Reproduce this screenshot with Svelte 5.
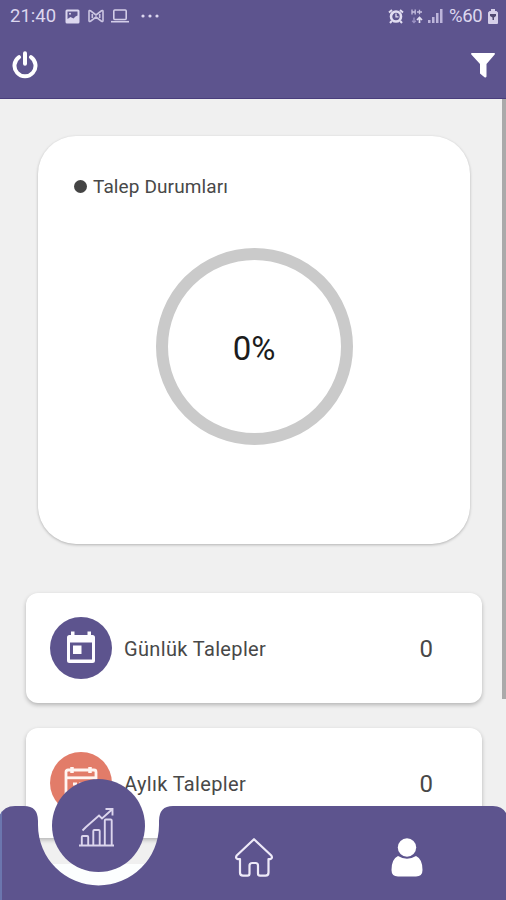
<script>
  const rows = [
    { label: 'Günlük Talepler', value: 0, icon: 'day' },
    { label: 'Aylık Talepler', value: 0, icon: 'month' }
  ];
  const percent = 0;
</script>

<div class="screen">
  <header>
    <div class="status">
      <div class="left">
        <span class="time">21:40</span>
        <svg class="picture" width="15" height="15" viewBox="0 0 15 15">
          <rect x=".5" y=".5" width="14" height="14" rx="1.5" fill="#dcd7ef" />
          <path d="M2.500 2.500h10v4l-2 1-2 2-3-1.500-3 2z" fill="#5d548e" />
          <circle cx="5" cy="4.800" r="1" fill="#dcd7ef" />
        </svg>
        <svg class="link" width="16" height="14" viewBox="0 0 16 14" fill="none" stroke="#cbc5e2" stroke-width="1.600">
          <path d="M1 12V2.500Q1 1 2.500 1.800L8 6l5.500-4.200Q15 1 15 2.500v9q0 1.500-1.500.7L8 8l-5.500 4.200Q1 13 1 11.500M4.300 5v4M11.700 5v4" />
        </svg>
        <svg class="laptop" width="18" height="14" viewBox="0 0 18 14" fill="none" stroke="#d3cde8" stroke-width="1.600">
          <rect x="2.800" y="1" width="12.400" height="9.500" rx="1" />
          <path d="M0 12.700h18" />
        </svg>
        <svg width="18" height="4" viewBox="0 0 18 4" fill="#dcd7ef">
          <circle cx="2" cy="2" r="1.600" /><circle cx="9" cy="2" r="1.600" /><circle cx="16" cy="2" r="1.600" />
        </svg>
      </div>
      <div class="right">
        <svg width="16" height="15" viewBox="0 0 16 15" fill="none" stroke="#e2def1" stroke-width="2.600">
          <circle cx="8" cy="7.500" r="5" />
          <path d="M1 3.500 4 1M15 3.500 12 1M3.800 12 2 14M12.200 12l1.800 2" stroke-width="2" />
          <path d="M8 4.500v3.300h2.500" stroke-width="1.300" />
        </svg>
        <svg class="data" width="12" height="15" viewBox="0 0 12 15" fill="none" stroke="#c6bfdf" stroke-width="1.300">
          <path d="M1 .5v5M4.200.5v5M1 3h3.200M6 3h5M8.500.8v4.400" />
          <path d="M3 8.500v5M1.200 11.700 3 13.600l1.800-1.900" stroke="#9b91c3" />
          <path d="M8.500 14V9M6 11l2.500-2.500L11 11" stroke="#e2def1" stroke-width="1.700" />
        </svg>
        <svg class="signal" width="15" height="14" viewBox="0 0 15 14" fill="#bdb5da">
          <path d="M0 11h2.500v3H0zM4 8h2.500v6H4zM8 4h2.500v10H8zM12 0h2.500v14H12z" />
        </svg>
        <span class="battery-text">%60</span>
        <svg width="10" height="15" viewBox="0 0 10 15">
          <path d="M3 0h4v2h1.500L10 3.500V14q0 1-1 1H1q-1 0-1-1V3.500L1.500 2H3z" fill="#d6d0e9" />
          <path d="M2 5h6v2L6 8.500V11H4.500V8.500L2 7z" fill="#514a72" />
        </svg>
      </div>
    </div>
    <div class="toolbar">
      <svg width="26" height="28" viewBox="0 0 26 28" fill="none" stroke="#fff" stroke-linecap="round">
        <path d="M7 6.200A10.500 10.500 0 1 0 19 6.200" stroke-width="4" />
        <path d="M13 2.200v10.500" stroke-width="4" />
      </svg>
      <svg width="24" height="25" viewBox="0 0 24 25">
        <path d="M.8 0h22.400q1.200.5.500 1.500L15.500 11v12.500q-.5 1.500-2 .7L9 20.500V11L.3 1.500Q-.3.5.8 0z" fill="#fff" />
      </svg>
    </div>
  </header>

  <main>
    <div class="scroll">
      <section class="chart">
        <div class="legend"><i></i><span>Talep Durumları</span></div>
        <div class="ring"><span>{percent}%</span></div>
      </section>
      {#each rows as row}
        <article class="row">
          <div class="badge {row.icon}">
            {#if row.icon === 'day'}
              <svg width="30" height="34" viewBox="0 0 30 34">
                <path fill-rule="evenodd" fill="#fdfcff" d="M5 .5h3.500V4h13V.5H25V4h1.500Q29 4 29 6.500v23q0 2.500-2.500 2.500h-23Q1 32 1 29.500v-23Q1 4 3.500 4H5zM4 11.500v17h22v-17z" />
                <rect x="7" y="14.500" width="8.500" height="8.500" fill="#fdfcff" />
              </svg>
            {:else}
              <svg width="34" height="34" viewBox="0 0 34 34" fill="none" stroke="#fff5f2" stroke-width="2.800">
                <rect x="2" y="4" width="30" height="28" rx="2" />
                <path d="M2 11.800h30" />
                <path d="M8 1v6M26 1v6" stroke-width="3.500" />
                <path d="M9 18h4M15 18h4M21 18h4M9 24h4M15 24h4M21 24h4" />
              </svg>
            {/if}
          </div>
          <span class="label">{row.label}</span>
          <span class="value">{row.value}</span>
        </article>
      {/each}
    </div>
    <div class="track"><div class="thumb"></div></div>
  </main>

  <nav>
    <svg class="shape" width="506" height="94" viewBox="0 0 506 94">
      <path d="M30 58H167V94H30z" fill="#fcfefe" />
      <path d="M0 94V9Q4 0 15 0H24Q38 0 38 15V19A60.500 60.500 0 0 0 159 19V15Q159 0 173 0H493Q502 0 506 7V94z" fill="#5d548e" />
      <path d="M0 94V9L2 5V94z" fill="#6b76ae" />
    </svg>
    <div class="tabs">
      <button class="stats" aria-label="İstatistik">
        <svg width="36" height="40" viewBox="0 0 36 40" fill="none" stroke="#dcd5ed" stroke-width="1.900">
          <path d="M0 38.500h35M2.800 38v-8q0-1 1-1h4.400q1 0 1 1v8M14.300 38V24q0-1 1-1h4.400q1 0 1 1v14M25.800 38V13.500q0-1 1-1h4.900q1 0 1 1V38" />
          <path d="M3.500 23.500 7 20M7 20 20 8.500l3 3L33 2.500M26.500 2H33.500V8.500" />
        </svg>
      </button>
      <button class="home" aria-label="Ana sayfa">
        <svg width="38" height="39" viewBox="0 0 38 39" fill="none" stroke="#eeeaf8" stroke-width="2.200" stroke-linejoin="round">
          <path d="M19 1.200 36.300 17.500Q38 20.500 35 21.200H33.500V34.500Q33.500 37.700 30.500 37.700H25Q23 37.700 23 35.500V27.500Q23 25 20.500 25H17.500Q14.500 25 14.500 27.500V35.500Q14.500 37.700 12.500 37.700H8Q5 37.700 5 34.500V21.200H3Q0 20.500 1.700 17.500z" />
        </svg>
      </button>
      <button class="user" aria-label="Profil">
        <svg width="32" height="39" viewBox="0 0 32 39" fill="#fff">
          <circle cx="16" cy="9.500" r="9.200" />
          <path d="M7 18Q16 23.500 25 18Q31.500 21 31.500 32Q31.500 38.500 25 38.500H7Q.5 38.500.5 32Q.5 21 7 18z" />
        </svg>
      </button>
    </div>
  </nav>
</div>

<style>
  :global(body) { margin: 0; }
  .screen {
    position: relative;
    width: 506px;
    height: 900px;
    overflow: hidden;
    display: flex;
    flex-direction: column;
    background: #f0f0f0;
    font-family: Roboto, "Liberation Sans", sans-serif;
    color: #484848;
  }
  svg { display: block; flex: none; }
  header {
    height: 99px;
    box-sizing: border-box;
    flex: none;
    background: #5d548e;
    border-bottom: 1px solid #493d7c;
  }
  .status {
    height: 32px;
    padding: 0 8px 0 10px;
    display: flex;
    justify-content: space-between;
    color: #dcd7ef;
  }
  .left, .right { display: flex; align-items: center; }
  .time { width: 55px; font-size: 18.5px; }
  .link { margin-left: 8px; }
  .laptop { margin: 0 12px 0 7px; }
  .data { margin-left: 7px; }
  .signal { margin: 0 6px 0 5px; }
  .battery-text { width: 39px; font-size: 18.5px; letter-spacing: -.4px; white-space: nowrap; }
  .toolbar {
    height: 65px;
    padding: 0 11px 0 12px;
    display: flex;
    align-items: center;
    justify-content: space-between;
  }
  .toolbar svg:last-child { margin-top: 2px; }
  main { flex: 1; min-height: 0; display: flex; }
  .scroll { flex: 1; overflow: hidden; padding: 37px 20px 0 26px; }
  .track { width: 4px; }
  .thumb { height: 600px; background: #aaa; }
  .chart {
    height: 408px;
    box-sizing: border-box;
    margin: 0 12px 49px 12px;
    padding: 38px 35px 0;
    border-radius: 38px;
    background: #fff;
    box-shadow: 0 1px 3px rgba(0, 0, 0, .26);
  }
  .legend { display: flex; align-items: center; height: 24px; font-size: 19px; letter-spacing: .12px; }
  .legend i { width: 13px; height: 13px; margin: 0 6px 0 1px; border-radius: 50%; background: #444; }
  .ring {
    width: 197px;
    height: 197px;
    box-sizing: border-box;
    margin: 50px auto 0;
    border: 12px solid #cacaca;
    border-radius: 50%;
    display: flex;
    align-items: center;
    justify-content: center;
    font-size: 33px;
    color: #1c1c1c;
  }
  .ring span { position: relative; top: 2px; }
  .row {
    height: 110px;
    margin-bottom: 25px;
    box-sizing: border-box;
    padding: 0 49px 0 24px;
    display: flex;
    align-items: center;
    border-radius: 12px;
    background: #fff;
    box-shadow: 0 2px 4px rgba(0, 0, 0, .25);
  }
  .badge {
    width: 62px;
    height: 62px;
    flex: none;
    border-radius: 50%;
    display: flex;
    align-items: center;
    justify-content: center;
    background: #5d548e;
  }
  .month { background: #e27c69; }
  .label { flex: 1; margin: 2px 0 0 12px; font-size: 20px; letter-spacing: .35px; }
  .value { margin-top: 2px; font-size: 24px; }
  nav { position: absolute; left: 0; bottom: 0; width: 506px; height: 94px; }
  .shape { position: absolute; inset: 0; }
  .tabs { position: relative; height: 94px; display: flex; align-items: center; }
  button {
    border: 0;
    padding: 0;
    background: none;
    display: flex;
    align-items: center;
    justify-content: center;
  }
  .stats {
    width: 93px;
    height: 93px;
    margin: -56px 0 0 52px;
    border-radius: 50%;
    background: #5d548e;
    box-sizing: border-box;
    padding: 4px 3px 0 0;
  }
  .home { margin: 8px 0 0 90px; }
  .user { margin: 8px 0 0 118px; }
</style>
